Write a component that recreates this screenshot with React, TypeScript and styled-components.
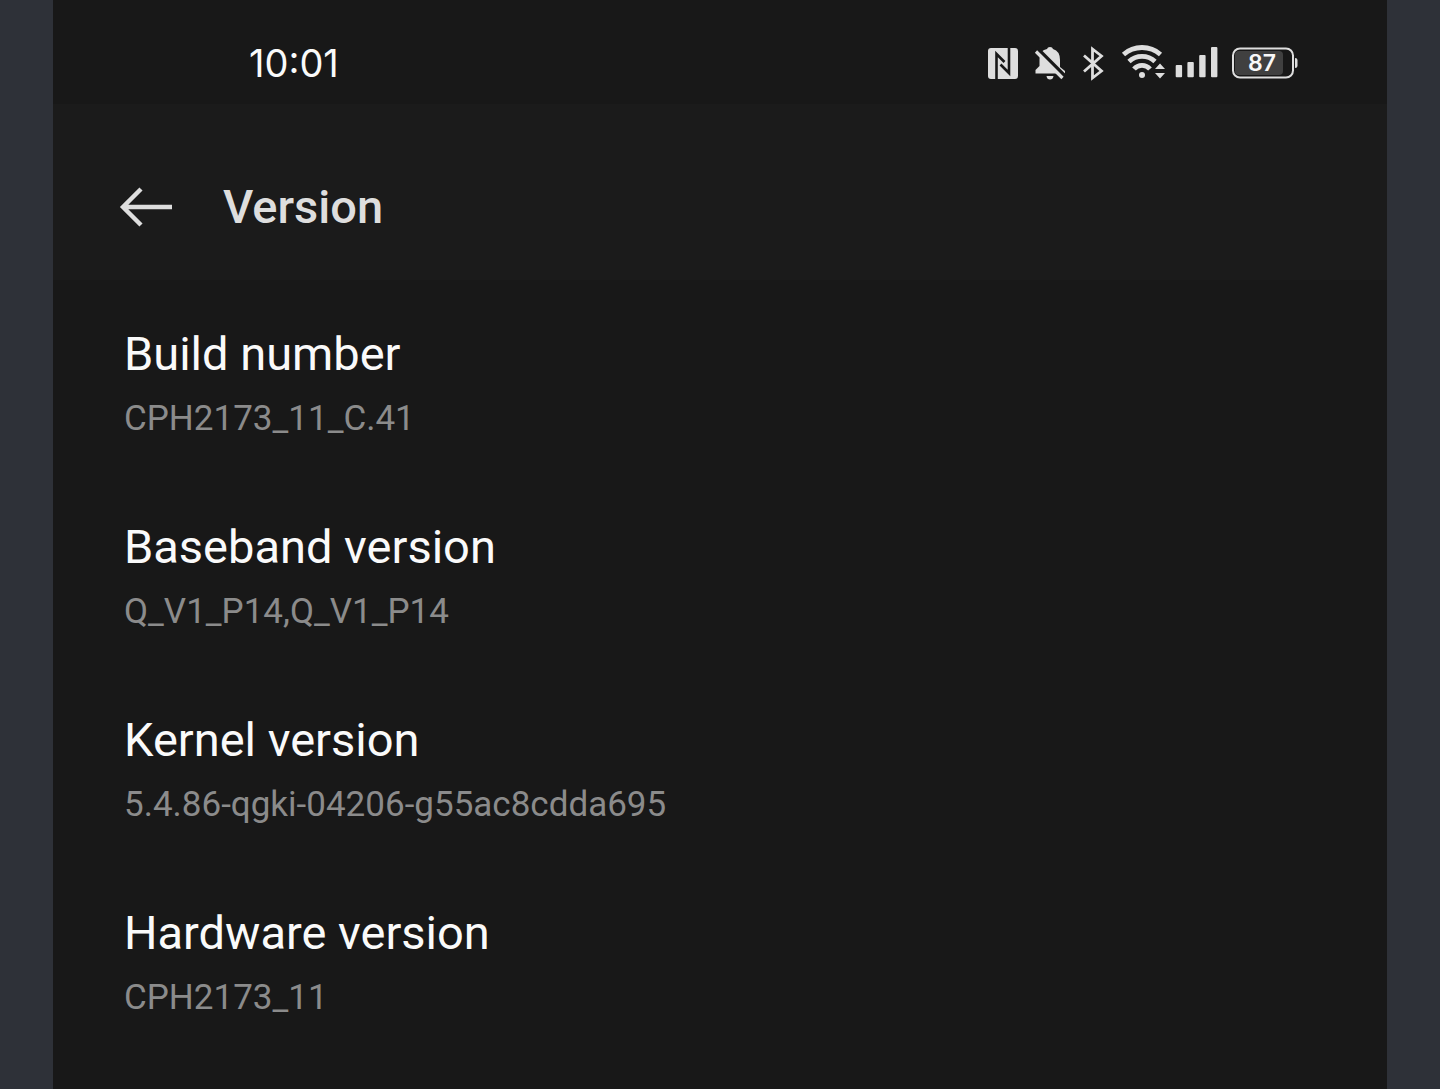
import React from "react";
import styled, { createGlobalStyle } from "styled-components";

const GlobalStyle = createGlobalStyle`
  *, *::before, *::after { box-sizing: border-box; }
  body {
    margin: 0;
    background: #2e3138;
    font-family: Roboto, "Noto Sans", sans-serif;
  }
`;

const Page = styled.div`
  min-height: 100vh;
  padding: 0 53px;
  display: flex;
`;

const Screen = styled.div`
  flex: 1;
  min-width: 0;
  background: #181818;
`;

const StatusBar = styled.div`
  padding: 42px 89px 20px 196px;
  display: flex;
  align-items: center;
  justify-content: space-between;
`;

const Clock = styled.time`
  font: 400 38px/42px Inter, sans-serif;
  color: #fafafa;
`;

const StatusIcons = styled.div`
  color: #dedede;

  svg { display: block; }
`;

const Header = styled.header`
  padding: 76px 64px 46px;
  display: flex;
  align-items: center;
  gap: 46px;
  background: #1b1b1b;
  color: #dedede;
`;

const BackButton = styled.button`
  padding: 0;
  border: 0;
  background: none;
  color: inherit;
  cursor: pointer;

  svg { display: block; }
`;

const Title = styled.h1`
  margin: 0;
  font-size: 47px;
  font-weight: 500;
  line-height: 54px;
`;

const Specs = styled.dl`
  margin: 0;
  padding: 47px 71px 0;
  display: grid;
  gap: 77px;
`;

const Name = styled.dt`
  font-size: 47px;
  line-height: 54px;
  color: #fafafa;
`;

const Value = styled.dd`
  margin: 14px 0 0;
  font-size: 35px;
  line-height: 48px;
  color: #8b8b8b;
`;

const specs = [
  ["Build number", "CPH2173_11_C.41"],
  ["Baseband version", "Q_V1_P14,Q_V1_P14"],
  ["Kernel version", "5.4.86-qgki-04206-g55ac8cdda695"],
  ["Hardware version", "CPH2173_11"],
];

const StatusGlyphs = () => (
  <svg width="312" height="42" viewBox="986 42 312 42" role="img" aria-label="NFC, muted, Bluetooth, Wi-Fi, mobile signal, battery 87%">
    <g fill="currentColor">
      <rect x="988" y="48" width="30" height="31" rx="3" />
      <path d="M996.500 79V54L1004.500 62" fill="none" stroke="#181818" strokeWidth="2.600" />
      <path d="M1009 48V73L1000.500 64.500" fill="none" stroke="#181818" strokeWidth="2.600" />
      <path d="M1041 52Q1044 49.500 1047 49Q1047.500 47 1050 47T1053 49Q1060 51 1060 60V67L1065 71V73.500H1035.500V70L1039.500 66V59Q1039.500 55 1041 52Z" />
      <path d="M1046.500 76H1053.500Q1053 79.500 1050 79.500T1046.500 76Z" />
    </g>
    <path d="M1037 48L1067 78" stroke="#181818" strokeWidth="3.600" />
    <path d="M1036 51.500L1062.500 78" stroke="currentColor" strokeWidth="3.200" />
    <path d="M1084 55.500L1101.500 71L1092.500 78V49L1101.500 56L1084 71.500" fill="none" stroke="currentColor" strokeWidth="2.800" />
    <g fill="none" stroke="currentColor" strokeWidth="4.800">
      <path d="M1123.500 54.500A28 28 0 0 1 1160.500 54.500" />
      <path d="M1129 61.500A19 19 0 0 1 1155 61.500" />
      <path d="M1134 69A10.500 10.500 0 0 1 1150 69" />
    </g>
    <g fill="currentColor">
      <circle cx="1142" cy="75" r="3" />
      <path d="M1155 69L1160 63.500L1165 69ZM1155 73H1165L1160 78.500Z" />
      <rect x="1175.700" y="65" width="6.400" height="12.300" rx="1" />
      <rect x="1187.400" y="62" width="6.400" height="15.300" rx="1" />
      <rect x="1199.200" y="55" width="6.400" height="22.300" rx="1" />
      <rect x="1211" y="47" width="6.400" height="30.300" rx="1" />
      <path d="M1295 58Q1297.500 58 1297.500 60V66Q1297.500 68 1295 68Z" />
    </g>
    <rect x="1235" y="51" width="48" height="24" rx="4" fill="#404040" />
    <rect x="1233" y="48.500" width="60" height="29" rx="7" fill="none" stroke="currentColor" strokeWidth="2" />
    <text x="1262" y="71" textAnchor="middle" fill="#f8f8f8" fontFamily="Inter, sans-serif" fontSize="23" fontWeight="600">87</text>
  </svg>
);

const App = () => (
  <>
    <GlobalStyle />
    <Page>
      <Screen>
        <StatusBar>
          <Clock>10:01</Clock>
          <StatusIcons>
            <StatusGlyphs />
          </StatusIcons>
        </StatusBar>
        <Header>
          <BackButton aria-label="Back">
            <svg width="60" height="54" viewBox="0 0 60 54" fill="none" stroke="currentColor" strokeWidth="4.400">
              <path d="M24 9L6 27L24 45M6 27H55" />
            </svg>
          </BackButton>
          <Title>Version</Title>
        </Header>
        <Specs>
          {specs.map(([name, value]) => (
            <div key={name}>
              <Name>{name}</Name>
              <Value>{value}</Value>
            </div>
          ))}
        </Specs>
      </Screen>
    </Page>
  </>
);

export default App;
